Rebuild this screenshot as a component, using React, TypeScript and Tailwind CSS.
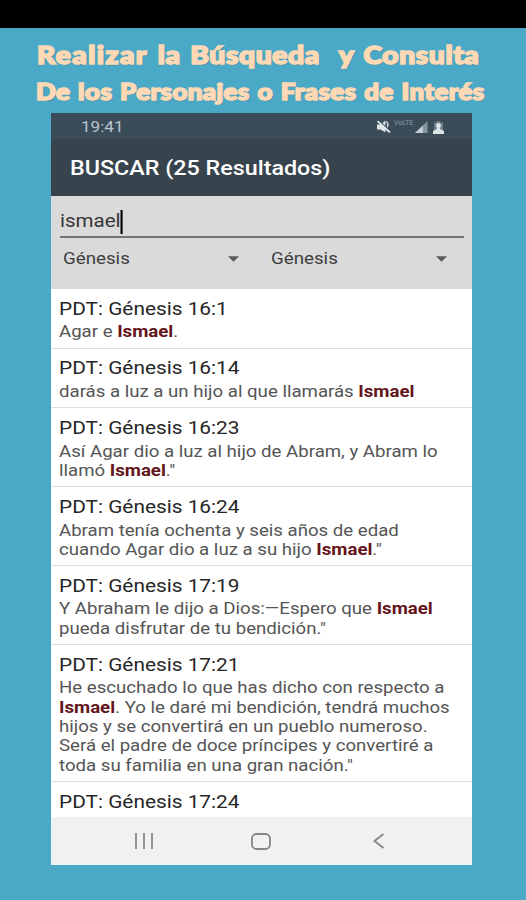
import React from 'react';

interface Result {
  title: string;
  lines: React.ReactNode[];
}

const Mark: React.FC<{ children: React.ReactNode }> = ({ children }) => (
  <b className="font-bold text-[#64141a]">{children}</b>
);

const results: Result[] = [
  { title: 'PDT: Génesis 16:1', lines: [<>Agar e <Mark>Ismael</Mark>.</>] },
  { title: 'PDT: Génesis 16:14', lines: [<>darás a luz a un hijo al que llamarás <Mark>Ismael</Mark></>] },
  {
    title: 'PDT: Génesis 16:23',
    lines: ['Así Agar dio a luz al hijo de Abram, y Abram lo', <>llamó <Mark>Ismael</Mark>."</>],
  },
  {
    title: 'PDT: Génesis 16:24',
    lines: ['Abram tenía ochenta y seis años de edad', <>cuando Agar dio a luz a su hijo <Mark>Ismael</Mark>."</>],
  },
  {
    title: 'PDT: Génesis 17:19',
    lines: [<>Y Abraham le dijo a Dios:—Espero que <Mark>Ismael</Mark></>, 'pueda disfrutar de tu bendición."'],
  },
  {
    title: 'PDT: Génesis 17:21',
    lines: [
      'He escuchado lo que has dicho con respecto a',
      <><Mark>Ismael</Mark>. Yo le daré mi bendición, tendrá muchos</>,
      'hijos y se convertirá en un pueblo numeroso.',
      'Será el padre de doce príncipes y convertiré a',
      'toda su familia en una gran nación."',
    ],
  },
  { title: 'PDT: Génesis 17:24', lines: [] },
];

const Heading: React.FC = () => (
  <div className="h-[85px] shrink-0 pt-[9px] font-[Lato,sans-serif] font-black text-[#ffd9b5] whitespace-pre [-webkit-text-stroke:1.6px_#ffd9b5] [text-shadow:1px_1px_1px_#4a8391]">
    <div className="ml-[37px] h-[36px] w-max origin-left scale-x-[1.18] text-[24px] leading-[36px] tracking-[0.45px] [word-spacing:2.2px]">
      <span className="tracking-[1.15px]">Realizar</span>
      {' la Búsqueda  y Consulta'}
    </div>
    <div className="ml-[36px] h-[36px] w-max origin-left scale-x-[1.13] text-[23px] leading-[36px] tracking-[0.3px] [word-spacing:1.2px]">
      De los Personajes o Frases de Interés
    </div>
  </div>
);

const StatusBar: React.FC = () => (
  <div className="flex h-[26px] shrink-0 items-center justify-between bg-[#3b4c59] pt-[2px] pr-[28px] pl-[30px] text-[#b9c6cf]">
    <span className="w-max origin-left scale-x-[1.14] text-[15px]">19:41</span>
    <div className="flex items-center">
      <svg className="mr-px h-[14px] w-[15px]" viewBox="0 0 15 14" fill="#dce4e8">
        <path d="M1 4.500h3.500l5-4v12L4.500 9.500H1z" />
        <path d="M10.500 1.500q3 2.500 0 7" fill="none" stroke="#dce4e8" strokeWidth="1.3" />
        <path d="M2.500 .5 14.500 11" stroke="#3b4c59" strokeWidth="1.2" />
        <path d="M1.500 1.200 14 12.500" stroke="#dce4e8" strokeWidth="1.8" />
      </svg>
      <span className="mb-[7px] ml-[2px] w-[18px] text-[7px] leading-none text-[#8c9aa5]">VoLTE</span>
      <svg className="ml-[3px] h-[12px] w-[13px]" viewBox="0 0 13 12">
        <path d="M0 12 12.500 0v12z" fill="#87949d" />
        <path d="M0 12 8 4.500V12z" fill="#c3cdd4" />
      </svg>
      <svg className="ml-[5px] h-[13px] w-[11px]" viewBox="0 0 11 13">
        <path d="M3.500 0h4v1.500H10V9H1V1.500h2.500z" fill="#71808b" />
        <path d="M5.500 2a2.600 2.600 0 0 1 1.300 4.800L7 8l4 2v3H0v-3l4-2 .2-1.200A2.600 2.600 0 0 1 5.500 2z" fill="#dce4e8" />
      </svg>
    </div>
  </div>
);

const Picker: React.FC<{ value: string }> = ({ value }) => (
  <div className="flex w-[208px] shrink-0 items-center justify-between pr-[32px]">
    <span className="origin-left scale-x-[1.17] text-[16px] leading-[22px] text-[#3d3d3d]">{value}</span>
    <svg className="h-[6px] w-[11px]" viewBox="0 0 12 6">
      <path d="M0 0h12L6 6z" fill="#5c5c5c" />
    </svg>
  </div>
);

const ResultRow: React.FC<{ result: Result }> = ({ result }) => (
  <div className="border-b border-[#dedede] pt-[7.7px] pb-[6.2px] pl-[8px] whitespace-nowrap last:border-0">
    <div className="w-max origin-left scale-x-[1.157] text-[18px] leading-[24px] text-[#262626]">{result.title}</div>
    <div className="mt-[1.5px]">
      {result.lines.map((line, i) => (
        <div key={i} className="w-max origin-left scale-x-[1.164] text-[16px] leading-[19.3px] text-[#555]">
          {line}
        </div>
      ))}
    </div>
  </div>
);

const App: React.FC = () => (
  <div className="flex h-[900px] w-[526px] flex-col overflow-hidden bg-[#4ba9c8]">
    <div className="h-[28px] shrink-0 bg-black" />
    <Heading />
    <div className="ml-[51px] flex h-[752px] w-[421px] shrink-0 flex-col bg-white font-[Roboto,sans-serif]">
      <StatusBar />
      <div className="flex h-[57px] shrink-0 items-center bg-[#37444d] pt-[2px] pl-[19px]">
        <h1 className="w-max origin-left scale-x-[1.11] text-[21px] font-medium text-white">BUSCAR (25 Resultados)</h1>
      </div>
      <div className="h-[93px] shrink-0 bg-[#dadada] px-[9px] pt-[10px]">
        <div className="flex h-[32px] w-[404px] items-center border-b-2 border-[#75767a]">
          <div className="flex w-max origin-left scale-x-[1.08] items-center pt-px text-[19px] text-[#363636]">
            ismael
            <span className="h-[24px] w-[2px] bg-black" />
          </div>
        </div>
        <div className="mt-[10px] flex pl-[3px]">
          <Picker value="Génesis" />
          <Picker value="Génesis" />
        </div>
      </div>
      <div className="min-h-0 flex-1 overflow-hidden">
        {results.map((result) => (
          <ResultRow key={result.title} result={result} />
        ))}
      </div>
      <div className="flex h-[48px] shrink-0 items-center justify-between bg-[#f1f1f1] pr-[88px] pl-[84px]">
        <svg className="h-[16px] w-[18px]" viewBox="0 0 18 16" stroke="#858585" strokeWidth="1.7">
          <path d="M1 0v16M9 0v16M17 0v16" />
        </svg>
        <svg className="mr-[4px] h-[17px] w-[20px]" viewBox="0 0 20 17" fill="none" stroke="#858585" strokeWidth="1.8">
          <rect x="1" y="1" width="18" height="15" rx="4.500" />
        </svg>
        <svg className="h-[16px] w-[11px]" viewBox="0 0 11 16" fill="none" stroke="#858585" strokeWidth="1.8">
          <path d="M10.500 1 1.500 8l9 7" />
        </svg>
      </div>
    </div>
  </div>
);

export default App;
